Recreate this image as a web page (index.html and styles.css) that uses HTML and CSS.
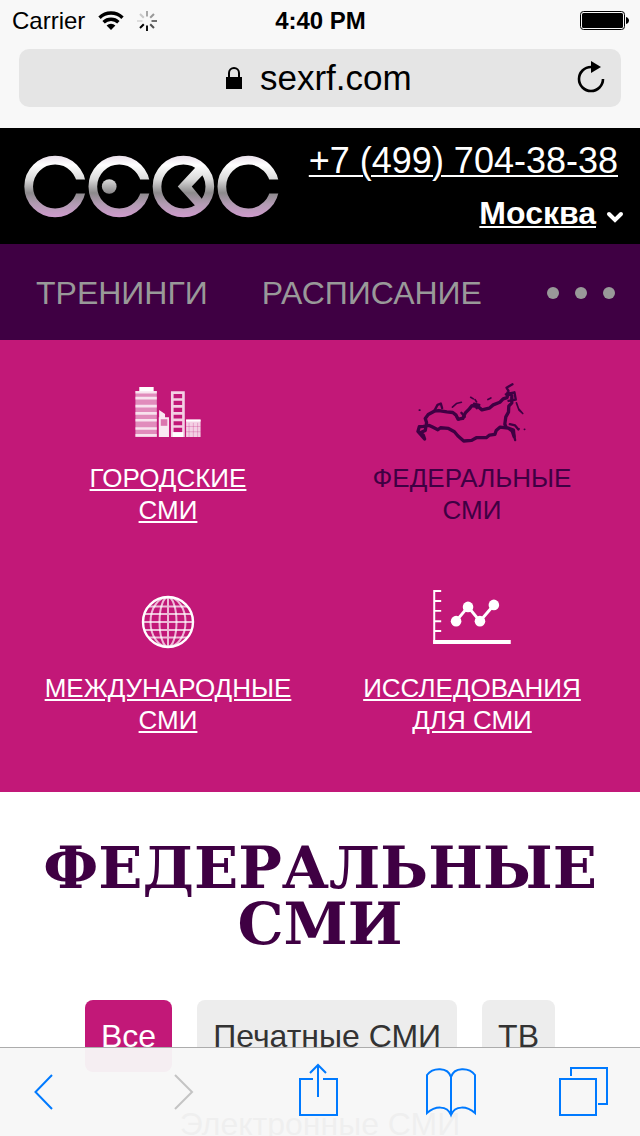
FILE: index.html
```html
<!DOCTYPE html>
<html lang="ru">
<head>
<meta charset="utf-8">
<meta name="viewport" content="width=device-width, initial-scale=1">
<title>Федеральные СМИ</title>
<link rel="stylesheet" href="styles.css">
</head>
<body>
<div class="screen">
  <div class="browser-top">
    <div class="status">
      <div class="status-left">
        <span>Carrier</span>
        <svg class="wifi" width="26" height="20" viewBox="0 0 26 20" fill="none" stroke="#000" stroke-width="3.4" aria-hidden="true">
          <path d="M1.500 6.700a16.500 16.500 0 0 1 23 0M5.600 11.200a10.600 10.600 0 0 1 14.800 0"/>
          <path d="M8.600 14.600a6.300 6.300 0 0 1 8.800 0L13 19z" fill="#000" stroke="none"/>
        </svg>
        <svg class="spinner" width="20" height="20" viewBox="-10 -10 20 20" stroke-width="2" aria-hidden="true">
          <path d="M0-4.500V-10" stroke="#a8a8a8"/>
          <path d="M3.200-3.200 7-7" stroke="#989898"/>
          <path d="M4.500 0H10" stroke="#707070"/>
          <path d="M3.200 3.200 7 7" stroke="#505050"/>
          <path d="M0 4.500V10" stroke="#111"/>
          <path d="M-3.200 3.200-7 7" stroke="#000"/>
          <path d="M-4.500 0H-10" stroke="#ddd"/>
          <path d="M-3.200-3.200-7-7" stroke="#c8c8c8"/>
        </svg>
      </div>
      <span class="time">4:40 PM</span>
      <svg class="battery" width="49" height="19" viewBox="0 0 49 19" aria-hidden="true">
        <rect x=".5" y=".5" width="44" height="18" rx="3" fill="none" stroke="#000"/>
        <rect x="2" y="2" width="41" height="15" rx="1.500"/>
        <path d="M46 6c4 1 4 6 0 7z"/>
      </svg>
    </div>
    <div class="address">
      <svg width="16" height="22" viewBox="0 0 16 22" aria-hidden="true">
        <path d="M0 10h16v12H0z"/>
        <path d="M3 11V6a5 5 0 0 1 10 0v5" fill="none" stroke="#000" stroke-width="2"/>
      </svg>
      <input class="address-text" type="text" value="sexrf.com" aria-label="Адрес">
      <button class="reload" type="button" aria-label="Обновить">
        <svg width="28" height="32" viewBox="0 0 28 32">
          <path d="M14 6a12 12 0 1 0 12 12" fill="none" stroke="#000" stroke-width="2.600"/>
          <path d="M14 0l10 6-10 6z"/>
        </svg>
      </button>
    </div>
  </div>

  <div class="page">
    <header class="header">
      <a class="logo" href="#" aria-label="Секс">
        <svg width="254" height="63" viewBox="72 80 760 188">
          <defs>
            <linearGradient id="metal" gradientUnits="userSpaceOnUse" x1="0" y1="82" x2="0" y2="267">
              <stop offset="0" stop-color="#e9dfea"/>
              <stop offset=".15" stop-color="#fff"/>
              <stop offset=".38" stop-color="#dadada"/>
              <stop offset=".6" stop-color="#8c8a8c"/>
              <stop offset=".78" stop-color="#b29bb3"/>
              <stop offset="1" stop-color="#cf9bcd"/>
            </linearGradient>
          </defs>
          <g fill="none" stroke="url(#metal)" stroke-width="26">
            <circle cx="165" cy="174" r="79"/>
            <circle cx="357" cy="174" r="79"/>
            <circle cx="549" cy="174" r="79"/>
            <circle cx="743" cy="174" r="79"/>
          </g>
          <path d="M200 153h58v42h-58zM392 153h58v42h-58zM778 153h60v42h-60z" fill="#000"/>
          <circle cx="327" cy="174" r="22" fill="url(#metal)"/>
          <path d="M592 110 532 174l60 66 18-22-36-44 42-44z" fill="url(#metal)"/>
        </svg>
      </a>
      <div class="contacts">
        <a class="phone" href="tel:+74997043838">+7 (499) 704-38-38</a>
        <button class="city" type="button"><span class="city-name">Москва</span>
          <svg width="18" height="12" viewBox="0 0 18 12" fill="none" stroke="#fff" stroke-width="4" aria-hidden="true"><path d="M3 3l6 6 6-6" stroke-linecap="round"/></svg>
        </button>
      </div>
    </header>

    <nav class="nav">
      <a href="#">ТРЕНИНГИ</a>
      <a href="#">РАСПИСАНИЕ</a>
      <button class="more" type="button" aria-label="Ещё"><i></i><i></i><i></i></button>
    </nav>

    <nav class="menu">
      <a class="menu-item" href="#">
        <span class="menu-icon">
          <svg width="66" height="50" viewBox="105 50 198 152" aria-hidden="true">
            <path d="M117 50h43v12h10v140h-65V62h12z" fill="#fff" fill-opacity=".5"/>
            <path d="M117 50h43v13h-43z" fill="#fff"/>
            <path d="M105 66h65M105 84h65M105 108h65M105 130h65M105 151h65M105 176h65M105 197h65" stroke="#fff" stroke-opacity=".75" stroke-width="8"/>
            <path d="M176 142h31v60h-31zM177 120l18 12v12h-18z" fill="#fff" fill-opacity=".9"/>
            <path d="M182 148h20v20h-20z" fill="#c21878" fill-opacity=".55"/>
            <path d="M217 202V67h34v135M217 88h34M217 109h34M217 130h34M217 150h34M217 170h34" fill="none" stroke="#fff" stroke-opacity=".8" stroke-width="8"/>
            <path d="M218 187h32v15h-32z" fill="#fff"/>
            <path d="M259 149h44v53h-44z" fill="#fff" fill-opacity=".8"/>
            <path d="M259 152h44" stroke="#fff" stroke-width="6"/>
            <path d="M268 159v43M281 159v43M294 159v43M259 170h44M259 186h44" stroke="#c21878" stroke-opacity=".25" stroke-width="3"/>
          </svg>
        </span>
        <span class="menu-label">ГОРОДСКИЕ<br>СМИ</span>
      </a>
      <a class="menu-item is-current" href="#" aria-current="page">
        <span class="menu-icon map">
          <svg width="108" height="63" viewBox="54 36 324 190" fill="none" stroke="#3f0043" stroke-linecap="round" stroke-linejoin="round" aria-hidden="true">
            <path stroke-width="10" d="M73 205l-4-12-8-8 14-6 4-24-4-12 9-12 18-10 14-2 24 4 18 2 10 8 6 12 14-2 8-17 12-12 8-10 18 3 12 10 22-5 12-10 20-8 10-10 12-4 2-14 12 8v22l-9 10-1 18-8 14-3 22 4 10 22 8 2 20-6-18-12-8-24-3-12 10-4 12-16 2-10 8h-30l-14 8-24 2-18-16-10-12-18-10-24-2-8 6-16-8-10-5-18 3-12 1-4 14z"/>
            <path stroke-width="7" d="M104 117l8-15 10-4 4 14M166 132l10 14 18-8-10-12M222 98l16 4-8 10M326 60l-6-10 18-10M318 70l26-6 4 22M326 90l22-4M330 160l16 4 10 12M340 180l6 28"/>
            <path stroke-width="5" d="M157 109l12-11 15-4M212 79l8 5M225 86l5 7M264 86l9-5M350 96l8 22 11 10-13-15M57 118h2M355 174h3M374 176h1"/>
          </svg>
        </span>
        <span class="menu-label">ФЕДЕРАЛЬНЫЕ<br>СМИ</span>
      </a>
      <a class="menu-item" href="#">
        <span class="menu-icon">
          <svg width="52" height="52" viewBox="0 0 52 52" fill="none" stroke="#fff" aria-hidden="true">
            <circle cx="26" cy="26" r="25" stroke-width="2.400"/>
            <g stroke-width="2" stroke-opacity=".7">
              <ellipse cx="26" cy="26" rx="17.500" ry="25"/>
              <ellipse cx="26" cy="26" rx="8.500" ry="25"/>
              <path d="M26 1v50M1 26h50M2.500 18h47M2.500 34h47M7 10.500h38M7 41.500h38"/>
            </g>
          </svg>
        </span>
        <span class="menu-label">МЕЖДУНАРОДНЫЕ<br>СМИ</span>
      </a>
      <a class="menu-item" href="#">
        <span class="menu-icon">
          <svg class="chart" width="78" height="54" viewBox="39 32 234 163" fill="none" stroke="#fff" aria-hidden="true">
            <path stroke-width="6" d="M42 32v163M39 35h24M39 65h24M39 95h24M39 126h24M39 156h24"/>
            <path stroke-width="12" d="M39 189h234"/>
            <path stroke-width="9" d="M108 126l36-43 36 43 42-49"/>
            <g fill="#fff" stroke="none"><circle cx="108" cy="126" r="16"/><circle cx="144" cy="83" r="16"/><circle cx="180" cy="126" r="16"/><circle cx="222" cy="77" r="16"/></g>
          </svg>
        </span>
        <span class="menu-label">ИССЛЕДОВАНИЯ<br>ДЛЯ СМИ</span>
      </a>
    </nav>

    <main class="content">
      <h1 class="title">ФЕДЕРАЛЬНЫЕ СМИ</h1>
      <div class="filters">
        <button class="chip is-active" type="button">Все</button>
        <button class="chip" type="button">Печатные СМИ</button>
        <button class="chip" type="button">ТВ</button>
        <button class="chip" type="button">Электронные СМИ</button>
      </div>
    </main>
  </div>

  <div class="toolbar">
    <button type="button" aria-label="Назад"><svg width="50" height="56" viewBox="0 0 50 56"><path d="M18 11 1.500 28 18 45"/></svg></button>
    <button type="button" aria-label="Вперёд" disabled><svg width="50" height="56" viewBox="0 0 50 56"><path d="M10 11l17 17-17 17"/></svg></button>
    <button type="button" aria-label="Поделиться"><svg width="50" height="56" viewBox="0 0 50 56"><path d="M17 15H4v36h37V15H27M22 33V1M14 9l8-8 8 8"/></svg></button>
    <button type="button" aria-label="Закладки"><svg width="50" height="56" viewBox="0 0 50 56"><path d="M24 13C21 3 6 3 0 11v38c8-7 20-8 24 2 4-10 16-9 24-2V11c-6-8-21-8-24 2v37"/></svg></button>
    <button type="button" aria-label="Вкладки"><svg width="50" height="56" viewBox="0 0 50 56"><path d="M2 15h36v36H2zM13 12V4h36v36h-9"/></svg></button>
  </div>
</div>
</body>
</html>
```
FILE: styles.css
```css
* {
  box-sizing: border-box;
}

body {
  margin: 0;
  font-family: "Liberation Sans", Arial, sans-serif;
  background: #fff;
}

button,
input {
  margin: 0;
  padding: 0;
  border: 0;
  background: none;
  font: inherit;
  color: inherit;
}

svg {
  display: block;
  flex: none;
  overflow: visible;
}

.screen {
  position: relative;
  display: flex;
  flex-direction: column;
  height: 100vh;
  overflow: hidden;
}

/* Browser chrome */
.browser-top {
  flex: none;
  padding-bottom: 21px;
  background: #f8f8f8;
  color: #000;
}

.status {
  display: grid;
  grid-template-columns: 1fr auto 1fr;
  align-items: center;
  height: 41px;
  margin-bottom: 8px;
  padding: 0 11px 0 12px;
  font-size: 24px;
}

.status-left {
  display: flex;
  align-items: center;
  gap: 13px;
}

.time {
  font-weight: bold;
}

.battery {
  justify-self: end;
}

.address {
  position: relative;
  display: flex;
  justify-content: center;
  align-items: center;
  gap: 18px;
  height: 58px;
  margin: 0 19px;
  border-radius: 10px;
  background: #e5e5e5;
}

.address-text {
  width: 154px;
  font-size: 35px;
  line-height: 40px;
}

.reload {
  position: absolute;
  right: 16px;
  top: 12px;
}

/* Site */
.page {
  flex: 1;
  min-height: 0;
  overflow-y: auto;
  scrollbar-width: none;
}

.header {
  display: flex;
  justify-content: space-between;
  align-items: center;
  height: 116px;
  padding: 0 16px 0 24px;
  background: #000;
  color: #fff;
}

.contacts {
  display: flex;
  flex-direction: column;
  align-items: flex-end;
  gap: 12px;
  padding-top: 2px;
}

.phone {
  margin-right: 6px;
  font-size: 36px;
  line-height: 40px;
  color: #fff;
  text-underline-offset: 2px;
  text-decoration-thickness: 2px;
}

.city {
  display: flex;
  align-items: center;
  gap: 10px;
  font-size: 32px;
  font-weight: bold;
  line-height: 40px;
}

.city svg {
  margin-top: 8px;
}

.city-name {
  text-decoration: underline 2px;
  text-underline-offset: 2px;
}

.nav {
  display: flex;
  align-items: center;
  gap: 54px;
  height: 96px;
  padding: 2px 25px 0 36px;
  background: #3f0043;
  font-size: 32px;
}

.nav a {
  color: #999;
  text-decoration: none;
}

.more {
  display: flex;
  gap: 16px;
  margin-left: auto;
}

.more i {
  width: 12px;
  height: 12px;
  border-radius: 50%;
  background: #999;
}

.menu {
  display: grid;
  grid-template-columns: 1fr 1fr;
  row-gap: 64px;
  padding: 40px 16px 56px;
  background: #c21878;
}

.menu-item {
  display: flex;
  flex-direction: column;
  align-items: center;
  gap: 18px;
  color: #fff;
  text-align: center;
}

.menu-icon {
  display: flex;
  align-items: center;
  height: 64px;
}

.menu-icon.map {
  padding-top: 4px;
}

.chart {
  align-self: flex-start;
}

.menu-label {
  font-size: 26px;
  line-height: 32px;
  text-decoration-thickness: 2px;
  text-underline-offset: 3px;
}

.is-current {
  color: #3f0043;
  text-decoration: none;
}

.content {
  padding: 48px 16px 104px;
}

.title {
  margin: 0 0 48px;
  font-family: "DejaVu Serif", serif;
  font-size: 58px;
  font-weight: bold;
  line-height: 56px;
  text-align: center;
  color: #3f0043;
}

.filters {
  display: flex;
  flex-wrap: wrap;
  justify-content: center;
  gap: 16px 25px;
}

.chip {
  padding: 16px;
  border-radius: 8px;
  background: #ededed;
  color: #333;
  font-size: 32px;
  line-height: 40px;
}

.chip.is-active {
  background: #c21878;
  color: #fff;
}

/* Browser toolbar, floating over the page */
.toolbar {
  position: absolute;
  left: 0;
  right: 0;
  bottom: 0;
  display: flex;
  justify-content: space-between;
  align-items: center;
  height: 89px;
  padding: 0 32px 0 34px;
  border-top: 1px solid #acacac;
  background: rgba(247, 247, 247, 0.96);
}

.toolbar svg {
  fill: none;
  stroke: #007aff;
  stroke-width: 2;
}

.toolbar button:disabled svg {
  stroke: #c4c4c4;
}
```
